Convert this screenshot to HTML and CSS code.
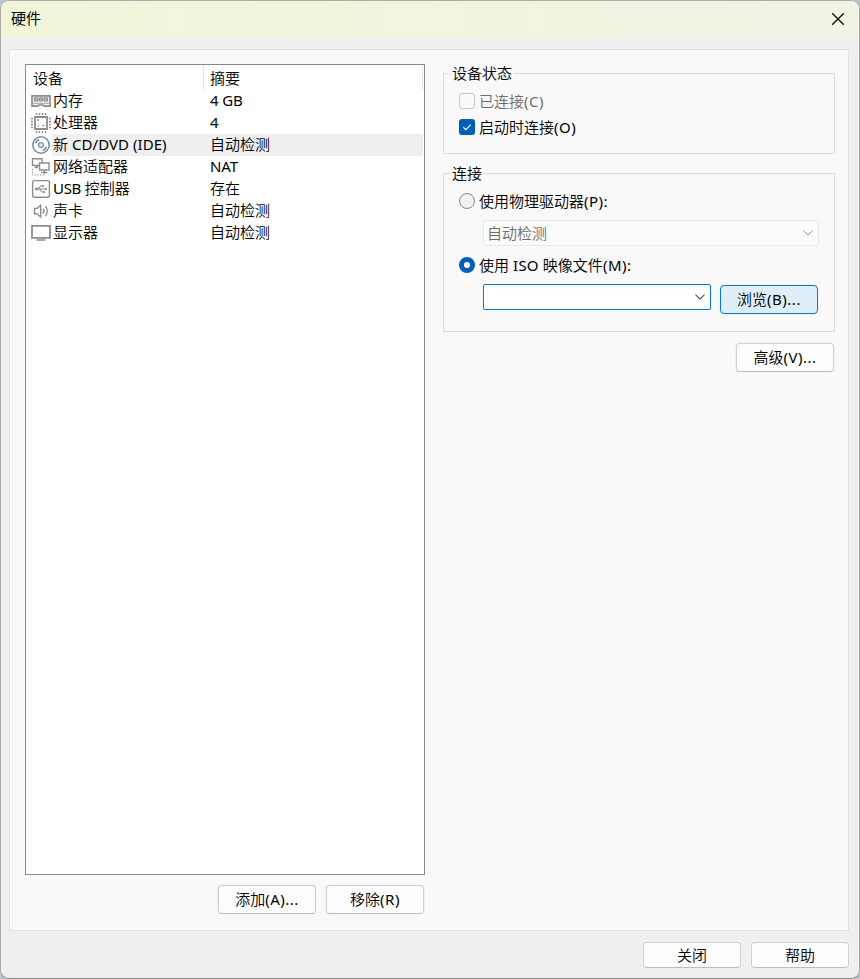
FILE: index.html
```
<!DOCTYPE html>
<html lang="zh-CN">
<head>
<meta charset="utf-8">
<title>硬件</title>
<link rel="stylesheet" href="styles.css">
</head>
<body>
<div class="window">
  <header class="titlebar">
    <span>硬件</span>
    <svg class="close" width="14" height="14" viewBox="0 0 14 14"><path d="M1.2 1.2 12.8 12.8M12.8 1.2 1.2 12.8" stroke="#111" stroke-width="1.4" fill="none"/></svg>
  </header>
  <main class="panel">
    <section class="left">
      <div class="list">
        <div class="head"><div class="c1">设备</div><div class="c2">摘要</div></div>
        <div class="row"><div class="icon"><svg width="20" height="20" viewBox="0 0 20 20" fill="none" stroke="#8c8c8c"><path d="M1 4.8H19V15.2H13.3L12 14H8L6.7 15.2H1Z" stroke-width="1.7" fill="#eee"/><path d="M3.5 6.8H7V10H3.5ZM8.3 6.8H11.7V10H8.3ZM13 6.8H16.5V10H13Z" fill="#b4b4b4"/><path d="M2 12.3H18" stroke="#a5a5a5"/></svg></div><div class="name">内存</div><div class="val"><span class="l">4 GB</span></div></div>
        <div class="row"><div class="icon"><svg width="20" height="20" viewBox="0 0 20 20" fill="none" stroke="#8c8c8c"><path d="M4 4H16V16H4Z" stroke-width="1.8"/><path d="M5.5 0V2M8.5 0V2M11.5 0V2M14.5 0V2M5.5 18V20M8.5 18V20M11.5 18V20M14.5 18V20M0 5.5H2M0 8.5H2M0 11.5H2M0 14.5H2M18 5.5H20M18 8.5H20M18 11.5H20M18 14.5H20" stroke-width="1.4"/><path d="M6 7H8M11.5 12.5H13.5M7 13H8" stroke-width="1.6"/></svg></div><div class="name">处理器</div><div class="val"><span class="l">4</span></div></div>
        <div class="row selected"><div class="icon"><svg width="20" height="20" viewBox="0 0 20 20" fill="none" stroke="#6f8ca5"><circle cx="10" cy="10" r="8.2" stroke-width="1.5"/><circle cx="10" cy="10" r="2.3" stroke-width="1.3"/><circle cx="10" cy="10" r=".6" fill="#6f8ca5" stroke="none"/><path d="M4.6 8.3A5.6 5.6 0 0 1 8.3 4.6M15.4 11.7A5.6 5.6 0 0 1 11.7 15.4" stroke-width="1.6"/></svg></div><div class="name">新<span class="l cd"> CD/DVD (IDE)</span></div><div class="val">自动检测</div></div>
        <div class="row"><div class="icon"><svg width="20" height="20" viewBox="0 0 20 20" fill="none" stroke="#8c8c8c"><path d="M1.5 1.7H11V8.5H1.5ZM6.2 8.5V10.5M3.5 10.5H7" stroke-width="1.4"/><path d="M8.5 6H18V13H8.5Z" fill="#fff" stroke-width="1.4"/><path d="M13.2 13V15.5M10.3 15.5H16.2" stroke-width="1.4"/><path d="M1.5 12V18H13.5V16" stroke-dasharray="1.2 1.5"/></svg></div><div class="name">网络适配器</div><div class="val"><span class="l">NAT</span></div></div>
        <div class="row"><div class="icon"><svg width="20" height="20" viewBox="0 0 20 20" fill="none" stroke="#8c8c8c"><rect x="1.6" y="1.6" width="16.8" height="16.6" rx="1.8" stroke-width="1.4"/><path d="M5 10H15.5M7 10 9.5 7H11.3M8.5 10 10.8 13H12.5" stroke-width="1.1"/><circle cx="5.5" cy="10" r="1.6" fill="#8c8c8c" stroke="none"/><circle cx="11.9" cy="7" r="1.1" fill="#8c8c8c" stroke="none"/><path d="M12.2 12H14V14H12.2ZM14.2 8.4 16.3 10 14.2 11.6Z" fill="#8c8c8c" stroke="none"/></svg></div><div class="name"><span class="l usb">USB </span>控制器</div><div class="val">存在</div></div>
        <div class="row"><div class="icon"><svg width="20" height="20" viewBox="0 0 20 20" fill="none" stroke="#8c8c8c" stroke-width="1.4"><path d="M3.5 7.5H6L9.7 4.3V16L6 12.7H3.5Z"/><path d="M12 7.7A3.8 3.8 0 0 1 12 12.6M14.3 5.3A7 7 0 0 1 14.3 15"/></svg></div><div class="name">声卡</div><div class="val">自动检测</div></div>
        <div class="row"><div class="icon"><svg width="20" height="20" viewBox="0 0 20 20" fill="none" stroke="#8c8c8c"><path d="M1 2.8H19V14.8H1Z" stroke-width="1.8"/><path d="M5.5 17H14.5" stroke-width="1.6"/></svg></div><div class="name">显示器</div><div class="val">自动检测</div></div>
      </div>
      <div class="actions"><button>添加<span class="l">(A)...</span></button><button>移除<span class="l">(R)</span></button></div>
    </section>
    <section class="right">
      <fieldset class="status">
        <legend>设备状态</legend>
        <label class="opt disabled"><i class="box"></i><span>已连接<span class="l">(C)</span></span></label>
        <label class="opt second"><i class="box checked"><svg width="16" height="16" viewBox="0 0 16 16"><path d="M4.3 8.2 6.8 10.7 11.8 5.7" fill="none" stroke="#fff" stroke-width="1.1"/></svg></i><span>启动时连接<span class="l">(O)</span></span></label>
      </fieldset>
      <fieldset class="conn">
        <legend>连接</legend>
        <label class="opt"><i class="radio"></i><span>使用物理驱动器<span class="l">(P):</span></span></label>
        <div class="combo off"><span>自动检测</span><svg width="10" height="6" viewBox="0 0 10 6"><path d="M.5.6 5 5 9.5.6" fill="none" stroke="#b4b4b4" stroke-width="1.1"/></svg></div>
        <label class="opt iso"><i class="radio on"></i><span>使用<span class="l isot"> ISO </span>映像文件<span class="l">(M):</span></span></label>
        <div class="pick"><div class="combo active"><svg width="10" height="6" viewBox="0 0 10 6"><path d="M.5.6 5 5 9.5.6" fill="none" stroke="#555" stroke-width="1.1"/></svg></div><button class="hot">浏览<span class="l">(B)...</span></button></div>
      </fieldset>
      <button class="advanced">高级<span class="l">(V)...</span></button>
    </section>
  </main>
  <footer><button>关闭</button><button>帮助</button></footer>
</div>
</body>
</html>
```
FILE: styles.css
```
* { box-sizing: border-box; }
body { margin: 0; background: #b9c4c8; font: 350 15px/22px "Noto Sans CJK SC", sans-serif; color: #000; }
.l { font-family: "Noto Sans", sans-serif; font-weight: 400; font-size: 15px; line-height: 1; letter-spacing: .5px; white-space: pre; }
.val .l { letter-spacing: -.1px; }
.cd { letter-spacing: .05px; }
.usb { letter-spacing: -.3px; }
.isot { letter-spacing: .2px; }
.window { width: 860px; height: 979px; border: 1px solid #ababab; border-bottom-color: #8c8c8c; border-radius: 9px; background: #efefef; overflow: hidden; }
.titlebar { height: 37px; padding: 0 14px 1px 10px; display: flex; align-items: center; justify-content: space-between; background: linear-gradient(90deg, #f3f5d9, #f0f4e5); }
.titlebar span { padding-bottom: 2px; font-weight: 400; }
.panel { display: flex; gap: 18px; width: 840px; height: 882px; margin: 11px 0 0 8px; padding: 14px 13px 14px 15px; border: 1px solid #e2e2e2; background: #f9f9f9; }
.left { width: 400px; flex: none; }
.list { height: 811px; border: 1px solid #828790; background: #fff; padding-right: 1px; }
.head { height: 25px; display: flex; border-right: 1px solid #e5e5e5; line-height: 25px; }
.c1 { width: 178px; padding-left: 7px; border-right: 1px solid #e5e5e5; }
.c2 { padding-left: 6px; }
.row { display: flex; height: 22px; line-height: 20px; }
.icon { width: 26px; padding: 1px 0 0 5px; background: #fff; }
.icon svg { display: block; }
.name { width: 158px; padding-left: 1px; }
.selected .name, .selected .val { background: #efefef; }
.val { flex: 1; white-space: nowrap; }
button { width: 98px; height: 29px; padding: 0 0 2px; border: 1px solid #d0d0d0; border-bottom-color: #bdbdbd; border-radius: 4px; background: #fdfdfd; font: inherit; color: inherit; box-shadow: 0 0 0 1px #f2f2f2; }
.actions { display: flex; justify-content: flex-end; gap: 10px; margin: 10px 1px 0 0; }
.right { width: 392px; flex: none; display: flex; flex-direction: column; }
fieldset { min-width: 0; margin: 0; padding: 0 15px; border: 1px solid #dcdcdc; }
legend { height: 22px; padding: 0 2px 0 1px; margin-left: -8px; line-height: 21px; }
.status { height: 92px; margin-top: -2px; }
.conn { height: 170px; margin-top: 8px; }
.opt { display: flex; align-items: center; gap: 4px; height: 22px; }
.status .opt { margin-top: 6px; }
.status .second { margin-top: 4px; }
.conn .opt { margin-top: 6px; }
.disabled { color: #6d6d6d; }
.box, .radio { width: 16px; height: 16px; flex: none; display: block; }
.box { border: 1px solid #c5c5c5; border-radius: 3px; background: #fafafa; }
.box.checked { background: #0060b8; border: 0; }
.box svg { display: block; }
.radio { border: 1px solid #858585; border-radius: 50%; background: #f1f1f1; }
.radio.on { border: 5px solid #0060b8; background: #fff; }
.combo { height: 26px; display: flex; align-items: center; justify-content: space-between; border: 1px solid #e8e8e8; border-radius: 2px; padding: 0 5px 0 3px; }
.combo.off { margin: 8px 0 0 24px; color: #6d6d6d; background: #fbfbfb; }
.conn .iso { margin-top: 8px; }
.pick { display: flex; gap: 9px; margin: 8px 0 0 24px; }
.combo.active { width: 228px; justify-content: flex-end; border-color: #0078d4; background: #fff; }
.pick button { margin-top: 1px; }
.hot { background: #e0eef9; border-color: #0078d4; }
.advanced { align-self: flex-end; margin: 11px 1px 0 0; }
footer { display: flex; justify-content: flex-end; gap: 10px; padding: 11px 10px 0 0; }
footer button { height: 26px; padding-bottom: 1px; }
```
